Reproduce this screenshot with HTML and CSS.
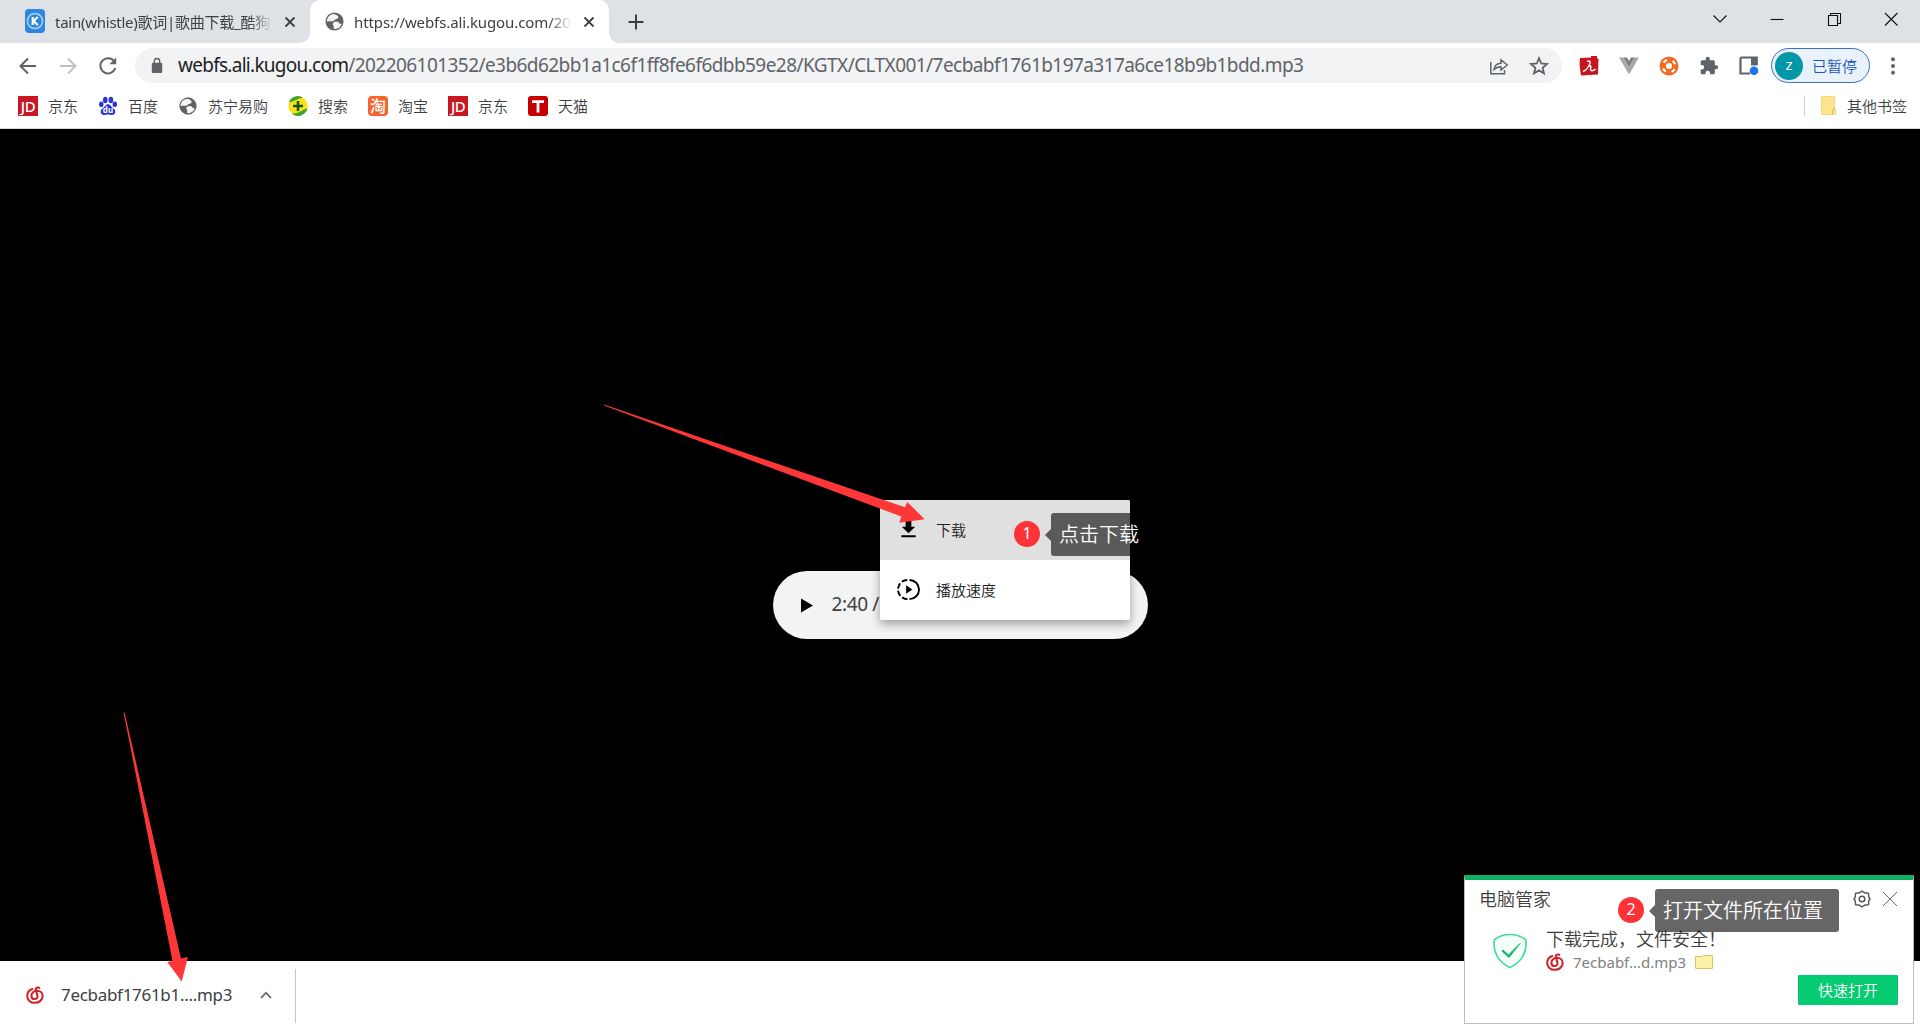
FILE: index.html
```html
<!DOCTYPE html>
<html lang="zh-CN">
<head>
<meta charset="utf-8">
<title>webfs.ali.kugou.com</title>
<link rel="stylesheet" href="styles.css">
</head>
<body>
<svg class="defs" aria-hidden="true">
  <symbol id="globe" viewBox="0 0 20 20">
    <circle cx="10" cy="10" r="9.500" fill="#5f6368"/>
    <path d="M9.500 2C11 3 13.500 3 14 5C14.300 6.800 12.500 7.500 11 7.800C9.500 8 9.800 9.300 8.300 9.700C7 10 6 9.500 5 9.700C4 9.800 3 9.600 2 10.300C1.600 6 5 2 9.500 2ZM10.500 10.200C12.500 9.600 14.500 10.500 15 11.800C15.500 12.800 17.500 12 17.500 12.800C16.500 15.500 14.500 17.400 11 17.900C8.500 18 9 17 9.300 15.500C9.500 14.300 8 14 8.200 12.500C8.400 11.200 9.500 10.500 10.500 10.200Z" fill="#fff" opacity=".93"/>
  </symbol>
  <symbol id="netease" viewBox="0 0 20 20">
    <g fill="none" stroke="#d0222a" stroke-width="2.300" stroke-linecap="round">
      <path d="M7 3.400C3.500 4.600 1.300 7.700 1.300 11.200C1.300 15.500 5 18.700 9.700 18.700C14.800 18.700 18.500 15.500 18.500 11C18.500 7.300 15.500 5.300 12 5.300C8.800 5.300 6 7.700 6 10.700C6 13 7.500 14.500 9.500 14.500C11.700 14.500 13.200 12.800 12.700 10.700L10.800 4.300C10.300 2.400 12.300 .9 14.700 2"/>
    </g>
  </symbol>
</svg>

<header class="tabstrip">
  <div class="tab tab-idle">
    <svg class="fav" viewBox="0 0 20 24"><rect width="20" height="24" rx="4" fill="#2e86de"/><circle cx="10" cy="12" r="7.600" fill="none" stroke="#a9d4fa" stroke-width="1.500"/><path d="M7.700 8v8M12.800 8L8.500 12L12.800 16" stroke="#fff" stroke-width="2.200" fill="none"/></svg>
    <span class="tab-title tight">tain(whistle)歌词|歌曲下载_酷狗</span>
    <svg class="close" viewBox="0 0 12 12"><path d="M1.500 1.500L10.500 10.500M10.500 1.500L1.500 10.500"/></svg>
  </div>
  <div class="tab tab-active">
    <svg class="globe"><use href="#globe"/></svg>
    <span class="tab-title">https://webfs.ali.kugou.com/20</span>
    <svg class="close" viewBox="0 0 12 12"><path d="M1.500 1.500L10.500 10.500M10.500 1.500L1.500 10.500"/></svg>
  </div>
  <svg class="plus" viewBox="0 0 16 16"><path d="M8 .5V15.500M.5 8H15.500"/></svg>
  <div class="win">
    <svg viewBox="0 0 16 16"><path d="M1.500 4.500L8 11L14.500 4.500"/></svg>
    <svg viewBox="0 0 16 16"><path d="M1.500 8.500H14.500"/></svg>
    <svg viewBox="0 0 16 16"><path d="M2.500 4.500H11.500V14.500H2.500ZM4.500 4.500V2.500H14.500V12.500H11.500"/></svg>
    <svg viewBox="0 0 16 16"><path d="M2 2L14.500 14.500M14.500 2L2 14.500"/></svg>
  </div>
</header>

<nav class="toolbar">
  <div class="navs">
    <svg viewBox="0 0 20 20"><path d="M18 10H3M10 2.500L2.500 10L10 17.500"/></svg>
    <svg class="dim" viewBox="0 0 20 20"><path d="M2 10H17M10 2.500L17.500 10L10 17.500"/></svg>
    <svg viewBox="0 0 20 20"><path d="M16.300 5.500A7.600 7.600 0 1 0 17.300 12"/><path d="M18.200 1.500V8.300H11.400Z" fill="#5f6368" stroke="none"/></svg>
  </div>
  <div class="omnibox">
    <svg class="lock" viewBox="0 0 12 18"><rect x=".5" y="6" width="11" height="11" rx="1.300" fill="#5f6368"/><path d="M3.200 7V4.300A2.800 2.800 0 0 1 8.800 4.300V7" fill="none" stroke="#5f6368" stroke-width="1.500"/></svg>
    <span class="url"><span class="host">webfs.ali.kugou.com</span>/202206101352/e3b6d62bb1a1c6f1ff8fe6f6dbb59e28/KGTX/CLTX001/7ecbabf1761b197a317a6ce18b9b1bdd.mp3</span>
    <svg class="share" viewBox="0 0 20 20"><path d="M1.800 6V17.800H15.500V14M5 13.500C5.500 9.500 8 7.500 12 7.300V3.800L18.300 9L12 14V10.700C9 10.700 7 11.500 5 13.500Z"/></svg>
    <svg class="star" viewBox="0 0 20 20"><path d="M10 2.200L12.200 7.500L18 8L13.600 11.800L15 17.400L10 14.400L5 17.400L6.400 11.800L2 8L7.800 7.500Z"/></svg>
  </div>
  <div class="exts">
    <svg viewBox="0 0 20 20"><path d="M1 2L12 1.500V0H18V2L19.500 3L19 18.500L2 19.500L1.200 14L.5 8Z" fill="#c4161c"/><path d="M8 5.500C11 4 12 5.500 10.500 8.500C9 11.500 7 14.500 4 15.500M9.500 10.500C12.500 8.500 12 11 11.500 13C11.300 15.500 14.500 15 16.500 13" fill="none" stroke="#fff" stroke-width="1.400"/></svg>
    <svg viewBox="0 0 20 20"><path d="M0 1.500H4.500L10 11L15.500 1.500H20L10 18.500Z" fill="#a9a9a9"/><path d="M4.500 1.500H8L10 5L12 1.500H15.500L10 11Z" fill="#7d7d7d"/></svg>
    <svg viewBox="0 0 20 20"><circle cx="10" cy="10" r="9.500" fill="#f06a25"/><circle cx="10" cy="10" r="3" fill="#fff"/><circle cx="10" cy="10" r="6.300" fill="none" stroke="#fff" stroke-width="2.200" stroke-dasharray="4 5.900" stroke-dashoffset="-3"/></svg>
    <svg viewBox="0 0 24 24"><path d="M20.500 11H19V7c0-1.100-.9-2-2-2h-4V3.500a2.500 2.500 0 0 0-5 0V5H4c-1.100 0-2 .9-2 2v3.800h1.500a2.700 2.700 0 0 1 0 5.400H2V20c0 1.100.9 2 2 2h3.800v-1.500a2.700 2.700 0 0 1 5.400 0V22H17c1.100 0 2-.9 2-2v-4h1.500a2.500 2.500 0 0 0 0-5Z" fill="#5f6368"/></svg>
    <svg viewBox="0 0 20 20"><path d="M1.500 1.500H17.500V9M11 17.500H1.500V1.500" fill="none" stroke="#5f6368" stroke-width="2.200"/><path d="M12 1H18.600V9.500H12Z" fill="#5f6368"/><circle cx="15" cy="14.800" r="4.300" fill="#1a73e8"/></svg>
  </div>
  <div class="profile"><span class="avatar">z</span><span>已暂停</span></div>
  <svg class="dots" viewBox="0 0 6 18"><circle cx="3" cy="2.300" r="2"/><circle cx="3" cy="9" r="2"/><circle cx="3" cy="15.700" r="2"/></svg>
</nav>

<nav class="bookmarks">
  <a><span class="sq jd">JD</span>京东</a>
  <a><svg viewBox="0 0 20 20"><g fill="#2a32d8"><ellipse cx="7.300" cy="4" rx="2.300" ry="3.200"/><ellipse cx="12.900" cy="4" rx="2.300" ry="3.200"/><ellipse cx="3.300" cy="8.200" rx="2.200" ry="2.800"/><ellipse cx="16.800" cy="8.200" rx="2.200" ry="2.800"/><path d="M10 8.300C12.500 8.300 13 11 15.500 12.500C18.500 14.500 17.500 19 14 19C12.500 19 11.500 18.500 10 18.500S7.500 19 6 19C2.500 19 1.500 14.500 4.500 12.500C7 11 7.500 8.300 10 8.300Z"/></g><text x="10" y="17.300" class="du">du</text></svg>百度</a>
  <a><svg viewBox="0 0 22 22"><use href="#globe" width="20" height="20" x="1" y="1"/></svg>苏宁易购</a>
  <a><svg viewBox="0 0 20 20"><circle cx="10" cy="10" r="9.700" fill="#ffe015"/><path d="M1 6A9.700 9.700 0 0 1 15 1.700C10 1 6 4 1 6ZM19.300 12.500A9.700 9.700 0 0 1 4 17.700C10 19 14 15 19.300 12.500Z" fill="#23932d"/><path d="M1 6C6 6 10 2 15 1.700A9.700 9.700 0 0 0 1 6ZM19.300 12.500C14 13.500 11 18 4 17.700A9.700 9.700 0 0 0 19.300 12.500Z" fill="#3fa52c"/><path d="M10 5V15M5 10H15" stroke="#0b5a1d" stroke-width="2.600"/></svg>搜索</a>
  <a><span class="sq tb">淘</span>淘宝</a>
  <a><span class="sq jd">JD</span>京东</a>
  <a><span class="sq tm"><svg viewBox="0 0 20 20"><path d="M4 5.700H16M10 5V16.500" stroke="#fff" stroke-width="2.800"/></svg></span>天猫</a>
  <a class="other"><svg class="folder" viewBox="0 0 16 19"><path d="M1.500 .5H14.500V12L15.500 14V18.500H1.500Z" fill="#fce58c" stroke="#f3d97a"/><path d="M12.500 18.500V14L15 12.500" fill="none" stroke="#d9b94a"/></svg>其他书签</a>
</nav>

<main class="page">
  <div class="player">
    <svg viewBox="0 0 12 14"><path d="M0 0L12 7L0 14Z"/></svg><span>2:40 /</span>
  </div>
  <div class="menu">
    <div class="item on"><svg viewBox="0 0 24 24"><path d="M19 9h-4V3H9v6H5l7 7 7-7zM4.500 18v2h15v-2z"/></svg>下载</div>
    <div class="item"><svg viewBox="0 0 24 24"><path d="M13 2A10 10 0 0 1 13 22" fill="none" stroke="#000" stroke-width="2"/><path d="M11 22A10 10 0 0 1 11 2" fill="none" stroke="#000" stroke-width="2" stroke-dasharray="6 2.300"/><path d="M9.500 7.500V16.500L16 12Z"/></svg>播放速度</div>
  </div>
</main>

<footer class="downloads">
  <div class="file">
    <svg class="ne"><use href="#netease"/></svg>
    <span class="filename">7ecbabf1761b1....mp3</span>
    <svg class="chev" viewBox="0 0 12 8"><path d="M1 7L6 1.700L11 7"/></svg>
  </div>
</footer>

<aside class="popup">
  <div class="pop-head"><span>电脑管家</span>
    <svg class="gear" viewBox="0 0 18 18"><path d="M9 1L11.500 2.800L15.500 3.300L15.700 7L17 9L15.700 11L15.500 14.700L11.500 15.200L9 17L6.500 15.200L2.500 14.700L2.300 11L1 9L2.300 7L2.500 3.300L6.500 2.800Z"/><circle cx="9" cy="9" r="2.800"/></svg>
    <svg class="x" viewBox="0 0 16 16"><path d="M1 1L15 15M15 1L1 15"/></svg>
  </div>
  <div class="pop-body">
    <svg class="shield" viewBox="0 0 36 36"><path d="M18 1.500C23 1.500 29 3 33.500 6.500C36 19 29 29.500 18 34.500C7 29.500 0 19 2.500 6.500C7 3 13 1.500 18 1.500Z" fill="#f4fffa" stroke="#3fdc96" stroke-width="1.600"/><path d="M11 17L16.500 22L28 10.500L17 24.500L10 18Z" fill="#14b86a" stroke="#14b86a"/></svg>
    <div class="pop-text">
      <div class="msg">下载完成，文件安全！</div>
      <div class="fname"><svg class="ne"><use href="#netease"/></svg><span>7ecbabf...d.mp3</span><svg class="fold" viewBox="0 0 18 14"><path d="M.5 1.500H7L8.500 .5H17.500V13.500H.5Z" fill="#fdf1a6" stroke="#dcc266"/></svg></div>
    </div>
  </div>
  <div class="pop-foot"><button>快速打开</button></div>
</aside>

<svg class="arrows" viewBox="0 0 1920 1030"><path d="M604 404.600L905 507.300L907.300 502L924.700 519.300L899.300 522.700L901.300 516.500L604 405.600ZM123.600 712.500L172.500 961L167.300 962L181.700 981.500L188 957L181 958.500L124.600 712.500Z"/></svg>
<div class="note n1"><b>1</b><span>点击下载</span></div>
<div class="note n2"><b>2</b><span>打开文件所在位置</span></div>
</body>
</html>
```
FILE: styles.css
```css
* { box-sizing: border-box; }
body {
  margin: 0; height: 1030px; display: flex; flex-direction: column; position: relative; overflow: hidden;
  background: #fff; color: #3c4043;
  font: 350 15px/20px "Noto Sans", "Noto Sans CJK SC", sans-serif;
  white-space: nowrap;
}
svg { display: block; flex: none; }
.defs { position: absolute; width: 0; height: 0; }

.tabstrip { height: 43px; flex: none; background: #dee1e6; display: flex; align-items: center; }
.tab { display: flex; align-items: center; height: 43px; }
.tab-idle { width: 310px; padding-left: 25px; }
.tab-active { width: 299px; padding-left: 15px; background: #fff; border-radius: 10px 10px 0 0; position: relative; }
.tab-active::before, .tab-active::after { content: ""; position: absolute; bottom: 0; width: 10px; height: 10px; }
.tab-active::before { left: -10px; background: radial-gradient(circle at 0 0, transparent 9.500px, #fff 10px); }
.tab-active::after { right: -10px; background: radial-gradient(circle at 100% 0, transparent 9.500px, #fff 10px); }
.fav { width: 20px; height: 24px; margin: -1px 10px 0 0; }
.globe { width: 19px; height: 19px; margin: -1px 10px 0 0; }
.tab-title { width: 218px; font-weight: 400; letter-spacing: -.1px; -webkit-mask-image: linear-gradient(90deg, #000 89%, transparent); mask-image: linear-gradient(90deg, #000 89%, transparent); }
.tight { letter-spacing: -.25px; }
.close { width: 12px; height: 12px; margin-left: 11px; fill: none; stroke: #3c4043; stroke-width: 1.800; }
.plus { width: 16px; height: 16px; margin-left: 19px; fill: none; stroke: #3c4043; stroke-width: 2; }
.win { display: flex; gap: 41px; margin-left: auto; padding-right: 21px; margin-top: -6px; }
.win svg { width: 16px; height: 16px; fill: none; stroke: #111; stroke-width: 1.100; }

.toolbar { height: 45px; flex: none; display: flex; align-items: center; }
.navs { display: flex; gap: 20px; width: 135px; padding-left: 18px; }
.navs svg { width: 20px; height: 20px; fill: none; stroke: #5f6368; stroke-width: 2; }
.navs .dim { stroke: #bdc1c6; }
.omnibox { width: 1427px; height: 35px; border-radius: 18px; background: #f1f3f4; display: flex; align-items: center; padding: 0 13px 0 16px; }
.lock { width: 12px; height: 17px; margin-right: 15px; }
.url { flex: 1; font-size: 19px; font-weight: 400; line-height: 26px; letter-spacing: -.56px; color: #5f6368; margin-top: -2px; }
.host { color: #202124; letter-spacing: -.72px; }
.share, .star { width: 20px; height: 20px; fill: none; stroke: #5f6368; stroke-width: 1.500; }
.share { margin-right: 20px; }
.star { stroke-width: 1.800; }
.exts { display: flex; gap: 20px; padding-left: 17px; }
.exts svg { width: 20px; height: 20px; }
.profile { width: 99px; height: 35px; margin-left: 12px; border: 1.500px solid #3c6fc0; border-radius: 18px; background: #e9f1fb; color: #2056c0; display: flex; align-items: center; gap: 9px; padding-left: 3px; }
.avatar { width: 28px; height: 28px; border-radius: 50%; background: #0097a7; color: #fff; font-weight: 400; line-height: 25px; text-align: center; }
.dots { width: 6px; height: 18px; margin-left: 20px; fill: #5f6368; }

.bookmarks { height: 41px; flex: none; display: flex; align-items: center; gap: 20px; padding: 0 13px 5px 18px; border-bottom: 1px solid #d8d8d8; }
.bookmarks a { display: flex; align-items: center; gap: 10px; }
.bookmarks svg, .sq { width: 20px; height: 20px; }
.sq { color: #fff; text-align: center; line-height: 20px; }
.jd { background: #c81623; font-size: 15px; letter-spacing: -.5px; font-weight: 500; }
.tb { background: #f5642d; border-radius: 4px; font-size: 16px; font-weight: 500; }
.tm { background: #c40000; border-radius: 3px; }
.du { font: bold 8px "Noto Sans", sans-serif; fill: #fff; text-anchor: middle; }
.bookmarks .other { margin-left: auto; gap: 11px; border-left: 1px solid #ccc; padding-left: 15px; }
.bookmarks .folder { width: 16px; height: 19px; }

.page { flex: 1; background: #000; position: relative; display: flex; justify-content: center; padding-top: 442px; }
.player { width: 375px; height: 68px; border-radius: 34px; background: #f1f3f4; display: flex; align-items: center; padding-left: 28px; gap: 19px; font-size: 19px; font-weight: 400; letter-spacing: -.4px; color: #404040; }
.player span { margin-top: -2px; }
.player svg { width: 12px; height: 15px; fill: #000; }
.menu { position: absolute; left: 880px; top: 371px; width: 250px; height: 120px; background: #fff; border-radius: 2px; box-shadow: 0 4px 10px rgba(0,0,0,.35); color: #202124; overflow: hidden; }
.item { height: 60px; display: flex; align-items: center; gap: 16px; padding: 0 0 1px 17px; }
.item svg { width: 23px; height: 23px; }
.on { background: #e0e0e0; }

.downloads { height: 69px; flex: none; display: flex; padding: 8px 0; background: #fff; }
.file { width: 296px; height: 54px; border-right: 1px solid #c8c8c8; display: flex; align-items: center; padding: 0 0 2px 26px; font-size: 17px; }
.filename { font-weight: 400; letter-spacing: -.3px; }
.ne { width: 18px; height: 20px; }
.file .ne { margin-right: 17px; }
.chev { width: 12px; height: 8px; margin-left: auto; margin-right: 23px; fill: none; stroke: #5f6368; stroke-width: 1.800; }

.popup { position: absolute; left: 1464px; top: 875px; width: 450px; height: 149px; background: #fff; border: 1px solid #bdbdbd; border-top: 5px solid #10b062; color: #404040; }
.pop-head { height: 38px; display: flex; align-items: center; padding: 0 15px 0 14px; font-size: 18px; }
.gear { width: 18px; height: 18px; margin-left: auto; margin-right: 11px; fill: none; stroke: #555; stroke-width: 1.400; }
.x { width: 16px; height: 16px; fill: none; stroke: #666; }
.pop-body { display: flex; padding-left: 27px; height: 54px; }
.shield { width: 36px; height: 36px; margin: 15px 18px 0 0; }
.msg { font-size: 18px; line-height: 26px; margin-top: 8px; }
.fname { display: flex; align-items: center; font-size: 15px; font-weight: 400; color: #808080; height: 20px; }
.fname .ne { margin-right: 9px; }
.fold { width: 18px; height: 14px; margin-left: 9px; }
.pop-foot { display: flex; justify-content: flex-end; padding: 3px 15px 0 0; }
.pop-foot button { width: 100px; height: 30px; border: 0; border-radius: 1px; background: #05cb71; color: #fff; font: inherit; padding: 0; }

.arrows { position: absolute; left: 0; top: 0; width: 1920px; height: 1030px; fill: #fd3737; }
.note { position: absolute; display: flex; align-items: center; color: #fff; height: 43px; }
.note b { width: 26px; height: 26px; border-radius: 50%; background: #fd3338; font-weight: 400; font-size: 16px; line-height: 24px; text-align: center; margin: -2px 11px 0 0; }
.note span { position: relative; height: 43px; line-height: 43px; padding: 0 16px 0 8px; border-radius: 3px; background: rgba(0,0,0,.6); font-size: 20px; }
.note span::before { content: ""; position: absolute; left: -6px; top: 16px; border: 6px solid transparent; border-left: 0; border-right-color: rgba(0,0,0,.6); }
.n1 { left: 1014px; top: 513px; }
.n2 { left: 1618px; top: 889px; }
```
